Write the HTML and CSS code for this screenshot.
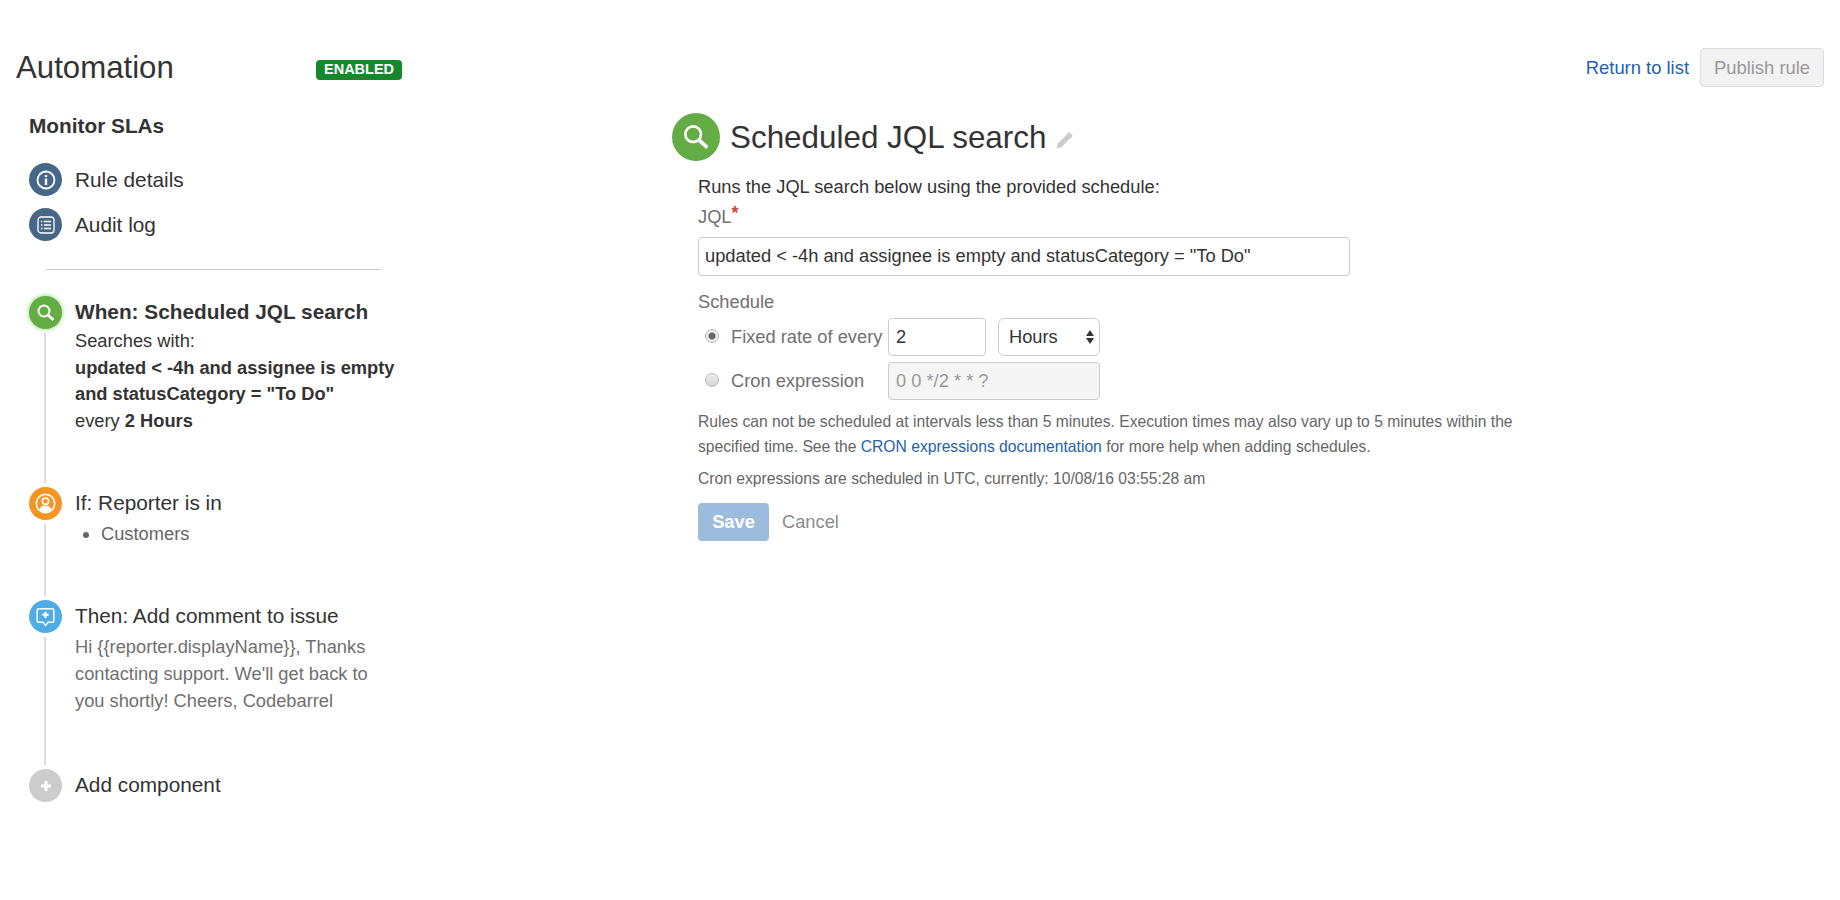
FILE: index.html
```html
<!DOCTYPE html>
<html lang="en">
<head>
    <meta charset="UTF-8">
    <title>Automation</title>
    <link rel="stylesheet" href="styles.css">
</head>
<body>
    <div class="page-header">
        <div class="page-title">
            <h1>Automation</h1>
            <span class="badge">ENABLED</span>
        </div>
        <div class="page-actions">
            <a class="link" href="#">Return to list</a>
            <button class="publish" type="button">Publish rule</button>
        </div>
    </div>

    <div class="main">
        <div class="sidebar">
            <h2 class="rule-name">Monitor SLAs</h2>
            <div class="nav-row">
                <span class="dot dot-slate">
                    <svg viewBox="0 0 24 24" width="24" height="24" fill="none" stroke="#fff" stroke-width="1.800">
                        <circle cx="12" cy="12" r="8.500"/>
                        <path d="M12 10.500v6.500" stroke-width="2.400"/>
                        <path d="M12 7v2" stroke-width="2.400"/>
                    </svg>
                </span>
                <span>Rule details</span>
            </div>
            <div class="nav-row">
                <span class="dot dot-slate">
                    <svg viewBox="0 0 24 24" width="24" height="24" fill="none" stroke="#fff" stroke-width="1.300">
                        <rect x="4" y="4" width="16" height="16" rx="3"/>
                        <path d="M7 8.500h1.400M10 8.500h7M7 12h1.400M10 12h7M7 15.500h1.400M10 15.500h7"/>
                    </svg>
                </span>
                <span>Audit log</span>
            </div>
            <div class="divider"></div>

            <div class="step step-when">
                <div class="rail">
                    <span class="dot dot-green dot-active">
                        <svg viewBox="0 0 24 24" width="24" height="24" fill="none" stroke="#fff" stroke-width="2">
                            <circle cx="10" cy="10" r="5.500"/>
                            <path d="M14 14l5.500 5" stroke-width="2.800"/>
                        </svg>
                    </span>
                    <span class="rail-line"></span>
                </div>
                <div class="step-body">
                    <div class="step-title step-title-bold">When: Scheduled JQL search</div>
                    <div class="step-text">Searches with:</div>
                    <div class="step-text"><b>updated &lt; -4h and assignee is empty and statusCategory = "To Do"</b></div>
                    <div class="step-text">every <b>2 Hours</b></div>
                </div>
            </div>

            <div class="step step-if">
                <div class="rail">
                    <span class="dot dot-orange">
                        <svg viewBox="0 0 24 24" width="25" height="25">
                            <circle cx="12" cy="12" r="8.800" fill="none" stroke="#fff" stroke-width="1.600"/>
                            <circle cx="12" cy="9.800" r="3" fill="none" stroke="#fff" stroke-width="1.600"/>
                            <path d="M6.200 18c1-3 3-4 5.800-4s4.800 1 5.800 4c-1.500 1.500-3.500 2.200-5.800 2.200S7.700 19.500 6.200 18z" fill="#fff"/>
                        </svg>
                    </span>
                    <span class="rail-line"></span>
                </div>
                <div class="step-body">
                    <div class="step-title">If: Reporter is in</div>
                    <ul class="step-list">
                        <li>Customers</li>
                    </ul>
                </div>
            </div>

            <div class="step step-then">
                <div class="rail">
                    <span class="dot dot-blue">
                        <svg viewBox="0 0 24 24" width="25" height="25">
                            <path d="M5.500 4.500h13a1.500 1.500 0 0 1 1.500 1.500v10a1.500 1.500 0 0 1-1.500 1.500h-4L12 20.500l-2.500-3h-4A1.500 1.500 0 0 1 4 16V6a1.500 1.500 0 0 1 1.500-1.500z" fill="none" stroke="#fff" stroke-width="1.400"/>
                            <path d="M12 7.500v6M9 10.500h6" stroke="#fff" stroke-width="2.200"/>
                        </svg>
                    </span>
                    <span class="rail-line"></span>
                </div>
                <div class="step-body">
                    <div class="step-title">Then: Add comment to issue</div>
                    <div class="step-comment">Hi {{reporter.displayName}}, Thanks contacting support. We'll get back to you shortly! Cheers, Codebarrel</div>
                </div>
            </div>

            <div class="step">
                <div class="rail">
                    <span class="dot dot-grey">
                        <svg viewBox="0 0 24 24" width="20" height="20">
                            <path d="M12 6v12M6 12h12" stroke="#fff" stroke-width="3.600"/>
                        </svg>
                    </span>
                </div>
                <div class="step-body">
                    <div class="step-title">Add component</div>
                </div>
            </div>
        </div>

        <div class="content">
            <div class="content-head">
                <span class="dot dot-green dot-big">
                    <svg viewBox="0 0 24 24" width="34" height="34" fill="none" stroke="#fff" stroke-width="1.900">
                        <circle cx="10" cy="10" r="5.500"/>
                        <path d="M14 14l6 5.500" stroke-width="2.600"/>
                    </svg>
                </span>
                <h2>Scheduled JQL search</h2>
                <svg class="pencil" viewBox="0 0 18 18" width="18" height="18">
                    <path d="M0.500 17.500l1.200-5L12.500 1.800a1 1 0 0 1 1.400 0l2.300 2.300a1 1 0 0 1 0 1.400L5.500 16.300z" fill="#ccc"/>
                </svg>
            </div>

            <form class="form">
                <p class="form-intro">Runs the JQL search below using the provided schedule:</p>
                <label class="form-label form-label-jql">JQL<sup>*</sup></label>
                <input class="text-input jql-input" type="text" value='updated &lt; -4h and assignee is empty and statusCategory = "To Do"'>

                <label class="form-label form-label-schedule">Schedule</label>
                <div class="schedule-row">
                    <input class="radio" type="radio" name="schedule" checked>
                    <span class="radio-label">Fixed rate of every</span>
                    <input class="text-input rate-input" type="text" value="2">
                    <div class="select-wrap">
                        <select class="unit-select">
                            <option>Hours</option>
                        </select>
                        <svg class="select-arrows" viewBox="0 0 8 14" width="8" height="14">
                            <path d="M4 0l4 6H0zM4 14L0 8h8z" fill="#333"/>
                        </svg>
                    </div>
                </div>
                <div class="schedule-row schedule-row-cron">
                    <input class="radio" type="radio" name="schedule">
                    <span class="radio-label">Cron expression</span>
                    <input class="text-input cron-input" type="text" placeholder="0 0 */2 * * ?" disabled>
                </div>

                <p class="help">Rules can not be scheduled at intervals less than 5 minutes. Execution times may also vary up to 5 minutes within the specified time. See the <a class="link" href="#">CRON expressions documentation</a> for more help when adding schedules.</p>
                <p class="help help-time">Cron expressions are scheduled in UTC, currently: 10/08/16 03:55:28 am</p>

                <div class="form-buttons">
                    <button class="save" type="button">Save</button>
                    <a class="cancel" href="#">Cancel</a>
                </div>
            </form>
        </div>
    </div>
</body>
</html>
```

FILE: styles.css
```css
body {
    font-family: "Liberation Sans", Arial, sans-serif;
    color: #333;
    background-color: #fff;
    margin: 0;
    padding: 48px 16px 0;
}
.link {
    color: #1f62ad;
    text-decoration: none;
}

/* header */
.page-header {
    display: flex;
    justify-content: space-between;
    align-items: center;
    height: 39px;
}
.page-title {
    display: flex;
    align-items: center;
}
h1 {
    width: 300px;
    margin: 0;
    font-size: 31.200px;
    font-weight: 400;
    line-height: 39px;
}
.badge {
    margin-top: 5px;
    padding: 0 8px 1px;
    font-size: 14.500px;
    font-weight: 700;
    line-height: 19px;
    color: #fff;
    background-color: #14892c;
    border-radius: 4px;
}
.page-actions {
    display: flex;
    align-items: center;
    gap: 11px;
    font-size: 18.400px;
}
.publish {
    width: 124px;
    height: 39px;
    padding: 0;
    font: inherit;
    color: #999;
    background-color: #f2f2f2;
    border: 1px solid #ddd;
    border-radius: 4px;
}

.main {
    display: flex;
}

/* sidebar */
.sidebar {
    flex: none;
    width: 643px;
    padding-left: 13px;
}
.rule-name {
    margin: 27px 0 25px;
    font-size: 20.800px;
    line-height: 24px;
}
.nav-row {
    display: flex;
    align-items: center;
    gap: 13px;
    margin-bottom: 12px;
    font-size: 20.800px;
    line-height: 33px;
}
.dot {
    flex: none;
    display: flex;
    align-items: center;
    justify-content: center;
    width: 33px;
    height: 33px;
    border-radius: 50%;
}
.dot-slate { background-color: #466788; }
.dot-green { background-color: #64ad45; }
.dot-orange { background-color: #f79423; }
.dot-blue { background-color: #4fade5; }
.dot-grey { background-color: #ccc; }
.dot-active {
    box-shadow: 0 0 5px #8fcf75;
}
.divider {
    width: 335px;
    height: 1px;
    margin: 28px 0 26px 17px;
    background-color: #ccc;
}
.step {
    display: flex;
    gap: 13px;
}
.rail {
    flex: none;
    display: flex;
    flex-direction: column;
    align-items: center;
    width: 33px;
}
.rail-line {
    flex: 1;
    width: 2px;
    margin: 4px 0 4px -2px;
    background-color: #ddd;
}
.step-body {
    width: 330px;
}
.step-when .step-body { padding-bottom: 53px; }
.step-if .step-body { padding-bottom: 53px; }
.step-then .step-body { padding-bottom: 55px; }
.step-title {
    margin-bottom: 2px;
    font-size: 20.800px;
    line-height: 31px;
}
.step-title-bold {
    margin-bottom: 1px;
    font-weight: 700;
}
.step-text {
    font-size: 18.300px;
    line-height: 26.500px;
}
.step-list {
    margin: 0;
    padding-left: 26px;
    font-size: 18.300px;
    line-height: 27px;
    color: #666;
}
.step-comment {
    width: 300px;
    font-size: 18.300px;
    line-height: 27px;
    color: #707070;
}

/* rule form */
.content {
    flex: 1;
    margin-top: 26px;
}
.content-head {
    display: flex;
    align-items: center;
}
.dot-big {
    width: 48px;
    height: 48px;
    margin-right: 10px;
}
.content-head h2 {
    margin: 0 10px 0 0;
    padding-top: 2px;
    font-size: 31.400px;
    font-weight: 400;
    line-height: 46px;
}
.pencil {
    margin-top: 5px;
}
.form {
    margin: 14px 0 0 26px;
    width: 816px;
    font-size: 18.300px;
}
.form-intro {
    margin: 0;
    line-height: 24px;
}
.form-label {
    display: block;
    line-height: 24px;
    color: #707070;
}
.form-label-jql {
    margin-top: 6px;
}
.form-label sup {
    color: #d04437;
    font-size: 18px;
    font-weight: 700;
    line-height: 0;
    vertical-align: 4px;
}
.form-label-schedule {
    margin-top: 14px;
}
.text-input {
    box-sizing: border-box;
    height: 38px;
    padding: 0 6px;
    font-family: inherit;
    font-size: 18.300px;
    color: #333;
    background-color: #fff;
    border: 1px solid #ccc;
    border-radius: 4px;
}
.jql-input {
    display: block;
    width: 652px;
    height: 39px;
    margin-top: 8px;
    padding-bottom: 2px;
}
.schedule-row {
    display: flex;
    align-items: center;
    height: 38px;
    margin-top: 4px;
}
.schedule-row-cron {
    margin-top: 6px;
}
.radio {
    appearance: none;
    flex: none;
    width: 14px;
    height: 14px;
    margin: 0 12px 2px 7px;
    background: linear-gradient(#eee, #d4d4d4);
    border: 1px solid #bbb;
    border-radius: 50%;
}
.radio:checked {
    background: radial-gradient(circle, #666 0, #666 3px, #eee 4px);
}
.radio-label {
    width: 157px;
    color: #707070;
    white-space: nowrap;
}
.rate-input {
    width: 98px;
    padding-left: 7px;
}
.select-wrap {
    position: relative;
    margin-left: 12px;
}
.unit-select {
    appearance: none;
    display: block;
    width: 102px;
    height: 38px;
    padding: 0 10px 2px;
    font-family: inherit;
    font-size: 18.300px;
    color: #333;
    background-color: #fff;
    border: 1px solid #ccc;
    border-radius: 6px;
}
.select-arrows {
    position: absolute;
    top: 12px;
    right: 6px;
}
.cron-input {
    width: 212px;
    padding-left: 7px;
    background-color: #f5f5f5;
}
.cron-input::placeholder {
    color: #999;
}
.help {
    margin: 9px 0 0;
    font-size: 15.660px;
    line-height: 25px;
    color: #666;
}
.help-time {
    margin-top: 8px;
    line-height: 24px;
}
.form-buttons {
    display: flex;
    align-items: center;
    gap: 13px;
    margin-top: 12px;
}
.save {
    width: 71px;
    height: 38px;
    padding: 0;
    font-family: inherit;
    font-size: 18.300px;
    font-weight: 700;
    color: #fff;
    background-color: #9dbbdd;
    border: none;
    border-radius: 4px;
}
.cancel {
    color: #8c8c8c;
    text-decoration: none;
}
```
